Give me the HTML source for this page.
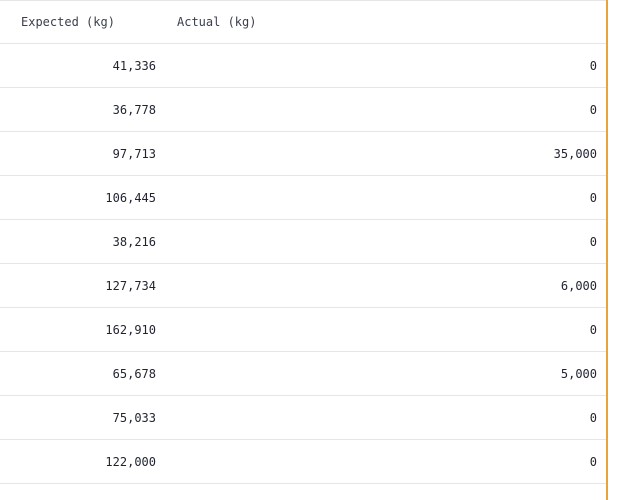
<!DOCTYPE html>
<html><head><style>
body{margin:0;width:628px;height:500px;background:#fff;position:relative;overflow:hidden;font-family:"DejaVu Sans Mono","Liberation Mono",monospace;font-size:12px;color:#1f2330}
.l{position:absolute;left:0;width:606px;height:1px;background:#e6e6e6}
.t{position:absolute;line-height:14px}
.e{right:472px;text-align:right}
.a{right:31px;text-align:right}
.v{position:absolute;left:606px;top:0;width:2px;height:500px;background:#e8a33a}
.h{color:#3a3f4e}
</style></head><body>
<div class="l" style="top:0"></div>
<div class="t h" style="left:21px;top:15px">Expected (kg)</div>
<div class="t h" style="left:177px;top:15px">Actual (kg)</div>
<div class="l" style="top:43px"></div>
<div class="t e" style="top:59px">41,336</div><div class="t a" style="top:59px">0</div>
<div class="l" style="top:87px"></div>
<div class="t e" style="top:103px">36,778</div><div class="t a" style="top:103px">0</div>
<div class="l" style="top:131px"></div>
<div class="t e" style="top:147px">97,713</div><div class="t a" style="top:147px">35,000</div>
<div class="l" style="top:175px"></div>
<div class="t e" style="top:191px">106,445</div><div class="t a" style="top:191px">0</div>
<div class="l" style="top:219px"></div>
<div class="t e" style="top:235px">38,216</div><div class="t a" style="top:235px">0</div>
<div class="l" style="top:263px"></div>
<div class="t e" style="top:279px">127,734</div><div class="t a" style="top:279px">6,000</div>
<div class="l" style="top:307px"></div>
<div class="t e" style="top:323px">162,910</div><div class="t a" style="top:323px">0</div>
<div class="l" style="top:351px"></div>
<div class="t e" style="top:367px">65,678</div><div class="t a" style="top:367px">5,000</div>
<div class="l" style="top:395px"></div>
<div class="t e" style="top:411px">75,033</div><div class="t a" style="top:411px">0</div>
<div class="l" style="top:439px"></div>
<div class="t e" style="top:455px">122,000</div><div class="t a" style="top:455px">0</div>
<div class="l" style="top:483px"></div>
<div class="v"></div>
</body></html>
